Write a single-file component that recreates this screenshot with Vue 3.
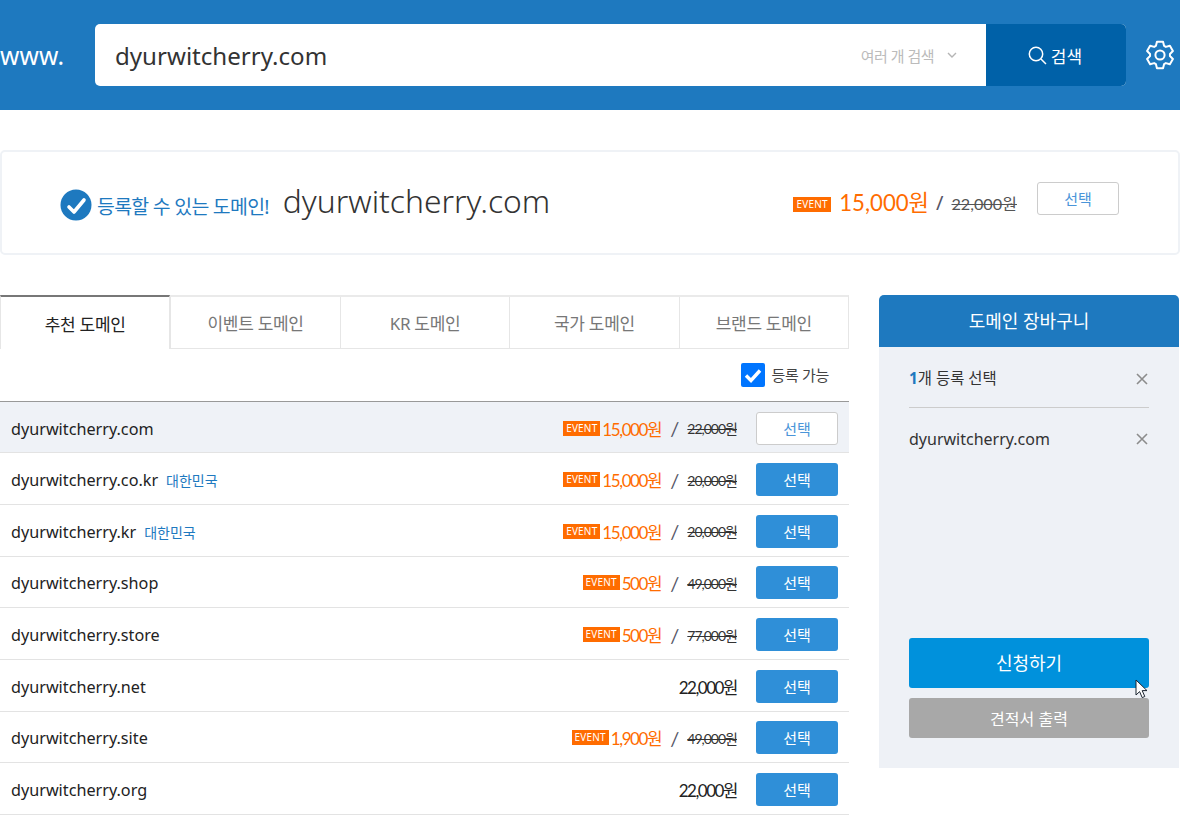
<script setup>
const tabs = ['추천 도메인', '이벤트 도메인', 'KR 도메인', '국가 도메인', '브랜드 도메인']

// 도메인 목록
const domains = [
  { name: 'dyurwitcherry.com', price: '15,000원', old: '22,000원', picked: true },
  { name: 'dyurwitcherry.co.kr', country: '대한민국', price: '15,000원', old: '20,000원' },
  { name: 'dyurwitcherry.kr', country: '대한민국', price: '15,000원', old: '20,000원' },
  { name: 'dyurwitcherry.shop', price: '500원', old: '49,000원' },
  { name: 'dyurwitcherry.store', price: '500원', old: '77,000원' },
  { name: 'dyurwitcherry.net', regular: '22,000원' },
  { name: 'dyurwitcherry.site', price: '1,900원', old: '49,000원' },
  { name: 'dyurwitcherry.org', regular: '22,000원' },
]

// 톱니 6개짜리 설정 아이콘
const gearPath = (() => {
  const pt = (r, deg) => {
    const a = (deg * Math.PI) / 180
    return `${(14 + r * Math.cos(a)).toFixed(2)} ${(15 + r * Math.sin(a)).toFixed(2)}`
  }
  let d = ''
  for (let i = 0; i < 6; i++) {
    const c = -90 + i * 60
    d += `${i ? 'L' : 'M'}${pt(10, c - 24)} L${pt(13.5, c - 13)} L${pt(13.5, c + 13)} L${pt(10, c + 24)} `
  }
  return d + 'Z'
})()
</script>

<template>
  <div class="page">
    <header class="search-bar">
      <span class="www">www.</span>
      <div class="search-box">
        <span class="search-text">dyurwitcherry.com</span>
        <span class="multi">
          여러 개 검색
          <svg width="10" height="6" viewBox="0 0 10 6"><path d="M1 1l4 4 4-4" fill="none" stroke="#b5b5b5" stroke-width="1.4" /></svg>
        </span>
        <button class="search-btn" type="button">
          <svg width="19" height="19" viewBox="0 0 19 19">
            <circle cx="8" cy="8" r="6.7" fill="none" stroke="#fff" stroke-width="1.5" />
            <path d="M13 13l5 5" stroke="#fff" stroke-width="1.5" />
          </svg>
          검색
        </button>
      </div>
      <svg class="gear" width="28" height="30" viewBox="0 0 28 30" fill="none" stroke="#fff" stroke-width="2" stroke-linejoin="round">
        <circle cx="14" cy="15" r="4.6" />
        <path :d="gearPath" />
      </svg>
    </header>

    <section class="result">
      <svg class="ok" width="32" height="32" viewBox="0 0 32 32">
        <circle cx="16" cy="16" r="15.5" fill="#1e79bf" />
        <path d="M9 18l5 5 10-12" fill="none" stroke="#fff" stroke-width="3.6" stroke-linecap="round" stroke-linejoin="round" />
      </svg>
      <span class="ok-text">등록할 수 있는 도메인!</span>
      <strong class="result-name">dyurwitcherry.com</strong>
      <div class="result-price">
        <span class="badge big">EVENT</span>
        <span class="price-now">15,000원</span>
        <span class="slash">/</span>
        <span class="price-old">22,000원</span>
        <button class="pick-outline" type="button">선택</button>
      </div>
    </section>

    <main class="content">
      <div class="list-col">
        <ul class="tabs">
          <li v-for="(tab, i) in tabs" :key="tab" :class="{ on: i === 0 }">{{ tab }}</li>
        </ul>
        <div class="filter">
          <span class="check">
            <svg width="24" height="24" viewBox="0 0 24 24">
              <rect width="24" height="24" rx="2" fill="#0075ff" />
              <path d="M5 12.5l5 5 9-10" fill="none" stroke="#fff" stroke-width="3.4" />
            </svg>
          </span>
          등록 가능
        </div>
        <div class="rows">
          <div v-for="d in domains" :key="d.name" class="row" :class="{ picked: d.picked }">
            <span class="name">{{ d.name }}</span>
            <span v-if="d.country" class="country">{{ d.country }}</span>
            <div class="prices">
              <template v-if="d.price">
                <span class="badge">EVENT</span>
                <span class="now">{{ d.price }}</span>
                <span class="sep">/</span>
                <span class="was">{{ d.old }}</span>
              </template>
              <span v-else class="regular">{{ d.regular }}</span>
            </div>
            <button class="pick" :class="{ done: d.picked }" type="button">선택</button>
          </div>
        </div>
      </div>

      <aside class="cart">
        <h2 class="cart-head">도메인 장바구니</h2>
        <div class="cart-body">
          <div class="cart-line count">
            <span><b>1</b>개 등록 선택</span>
            <svg class="x" width="12" height="12" viewBox="0 0 12 12"><path d="M1 1l10 10M11 1L1 11" stroke="#8c8c8c" stroke-width="1.6" /></svg>
          </div>
          <div class="cart-line item">
            <span>dyurwitcherry.com</span>
            <svg class="x" width="12" height="12" viewBox="0 0 12 12"><path d="M1 1l10 10M11 1L1 11" stroke="#8c8c8c" stroke-width="1.6" /></svg>
          </div>
          <button class="apply" type="button">신청하기</button>
          <button class="quote" type="button">견적서 출력</button>
          <svg class="cursor" width="14" height="20" viewBox="0 0 14 20">
            <path d="M1 1v15l3.6-3.4 2.6 6 2.6-1.1-2.6-5.9H12z" fill="#fff" stroke="#1b2430" stroke-width="1" />
          </svg>
        </div>
      </aside>
    </main>
  </div>
</template>

<style scoped>
.page {
  height: 815px;
  overflow: hidden;
  font-family: "Noto Sans", "Noto Sans CJK KR", sans-serif;
  color: #222;
  background: #fff;
}
button {
  font-family: inherit;
  border: none;
  padding: 0;
}
ul {
  list-style: none;
  margin: 0;
  padding: 0;
}

/* 상단 검색 */
.search-bar {
  display: flex;
  align-items: center;
  height: 110px;
  background: #1e79bf;
  box-sizing: border-box;
}
.www {
  width: 95px;
  color: #fff;
  font-size: 24.6px;
  letter-spacing: 0.2px;
}
.search-box {
  display: flex;
  align-items: center;
  width: 1031px;
  height: 62px;
  background: #fff;
  border-radius: 5px;
  overflow: hidden;
}
.search-text {
  flex: 1;
  padding-left: 20px;
  font-size: 24.1px;
  color: #333;
}
.multi {
  display: flex;
  align-items: center;
  gap: 13px;
  margin-right: 29px;
  font-size: 15px;
  color: #bbb;
  letter-spacing: -0.5px;
}
.search-btn {
  display: flex;
  align-items: center;
  justify-content: center;
  gap: 4px;
  width: 140px;
  height: 62px;
  padding-right: 2px;
  background: #0061a8;
  color: #fff;
  font-size: 17px;
}
.gear {
  margin-left: 20px;
}

/* 검색 결과 */
.result {
  display: flex;
  align-items: center;
  box-sizing: border-box;
  height: 105px;
  margin-top: 40px;
  padding: 0 59px 0 60px;
  border: 2px solid #eff2f6;
  border-radius: 5px;
}
.ok {
  margin-left: -2px;
  margin-top: 4px;
}
.ok-text {
  margin-left: 5px;
  margin-top: 5px;
  font-size: 19.4px;
  color: #1e79bf;
  letter-spacing: -0.7px;
}
.result-name {
  margin-left: 14px;
  margin-top: -4px;
  font-size: 31.8px;
  font-weight: 300;
  color: #333;
}
.result-price {
  display: flex;
  align-items: center;
  margin-left: auto;
}
.badge {
  display: inline-block;
  width: 37px;
  height: 15px;
  line-height: 15px;
  background: #ff6c00;
  color: #fff;
  font-family: "Noto Sans", sans-serif;
  font-size: 10px;
  letter-spacing: 0.2px;
  text-align: center;
}
.badge.big {
  margin-top: 4px;
  margin-right: 8px;
  width: 38px;
}
.price-now {
  font-family: Lato, "Noto Sans CJK KR", sans-serif;
  font-size: 22.2px;
  color: #ff6c00;
  margin-top: -3px;
}
.slash {
  margin: 0 8px 0 7px;
  font-size: 20px;
  color: #556;
}
.price-old {
  font-family: Lato, "Noto Sans CJK KR", sans-serif;
  font-size: 16.2px;
  color: #555;
  text-decoration: line-through;
}
.pick-outline {
  width: 82px;
  height: 33px;
  margin-left: 20px;
  margin-top: -9px;
  background: #fff;
  border: 1px solid #ccc;
  border-radius: 3px;
  color: #4a95d9;
  font-size: 15px;
}

/* 목록 + 장바구니 */
.content {
  display: flex;
  align-items: flex-start;
  margin-top: 40px;
}
.list-col {
  width: 849px;
}
.tabs {
  display: flex;
  height: 54px;
  box-sizing: border-box;
  border-top: 2px solid #eaeaea;
  border-bottom: 1px solid #e6e6e6;
  border-right: 1px solid #e6e6e6;
}
.tabs li {
  flex: 1;
  display: flex;
  align-items: center;
  justify-content: center;
  border-left: 1px solid #e6e6e6;
  font-size: 17px;
  color: #777;
  letter-spacing: -0.3px;
}
.tabs li.on {
  position: relative;
  margin-top: -2px;
  margin-bottom: -1px;
  border-top: 2px solid #777;
  border-right: 1px solid #e6e6e6;
  background: #fff;
  color: #222;
}
.filter {
  display: flex;
  align-items: center;
  justify-content: flex-end;
  gap: 6px;
  height: 51.7px;
  padding-right: 20px;
  border-bottom: 1px solid #999;
  font-size: 15px;
  letter-spacing: -0.3px;
  color: #444;
}
.check {
  display: flex;
}
.row {
  display: flex;
  align-items: center;
  box-sizing: border-box;
  height: 51.67px;
  padding: 2px 11px 0;
  border-bottom: 1px solid #e3e3e3;
}
.row.picked {
  background: #eff2f7;
}
.name {
  margin-top: 1px;
  font-size: 16.2px;
  color: #222;
}
.country {
  margin-left: 8px;
  margin-top: 1px;
  font-size: 14px;
  color: #1e79bf;
}
.prices {
  display: flex;
  align-items: center;
  margin-left: auto;
  margin-right: 19px;
  font-family: Lato, "Noto Sans CJK KR", sans-serif;
}
.prices .badge {
  margin-right: 2px;
}
.now {
  font-size: 17px;
  color: #ff6c00;
  letter-spacing: -1.4px;
}
.sep {
  margin: 0 8px 0 9px;
  font-size: 20px;
  line-height: 20px;
  color: #556;
}
.was {
  font-size: 14px;
  color: #333;
  letter-spacing: -1px;
  text-decoration: line-through;
}
.regular {
  font-size: 17px;
  color: #222;
  letter-spacing: -1.5px;
}
.pick {
  width: 82px;
  height: 33px;
  background: #2f8fd8;
  border-radius: 3px;
  color: #fff;
  font-size: 15px;
}
.pick.done {
  background: #fff;
  border: 1px solid #ccc;
  color: #4a95d9;
}

/* 장바구니 */
.cart {
  width: 300px;
  margin-left: 30px;
}
.cart-head {
  margin: 0;
  height: 52px;
  line-height: 52px;
  background: #1e79bf;
  border-radius: 5px 5px 0 0;
  color: #fff;
  font-size: 18px;
  font-weight: 400;
  text-align: center;
}
.cart-body {
  position: relative;
  display: flex;
  flex-direction: column;
  box-sizing: border-box;
  height: 421px;
  padding: 0 30px;
  background: #eef1f6;
}
.cart-line {
  display: flex;
  align-items: center;
  justify-content: space-between;
}
.count {
  height: 60px;
  border-bottom: 1px solid #ccc;
  font-size: 15.4px;
  color: #333;
}
.count .x {
  margin-top: 3px;
}
.count b {
  color: #1e79bf;
}
.item {
  height: 62px;
  font-size: 16px;
  color: #333;
}
.item span {
  margin-top: -1px;
}
.x {
  margin-right: 1px;
}
.apply {
  height: 50px;
  margin-top: auto;
  padding-bottom: 2px;
  background: #0091dc;
  border-radius: 3px;
  color: #fff;
  font-size: 18px;
}
.quote {
  height: 40px;
  margin-top: 10px;
  margin-bottom: 30px;
  background: #a8a8a8;
  border-radius: 3px;
  color: #fff;
  font-size: 16px;
}
.cursor {
  position: absolute;
  left: 256px;
  top: 332px;
}
</style>
